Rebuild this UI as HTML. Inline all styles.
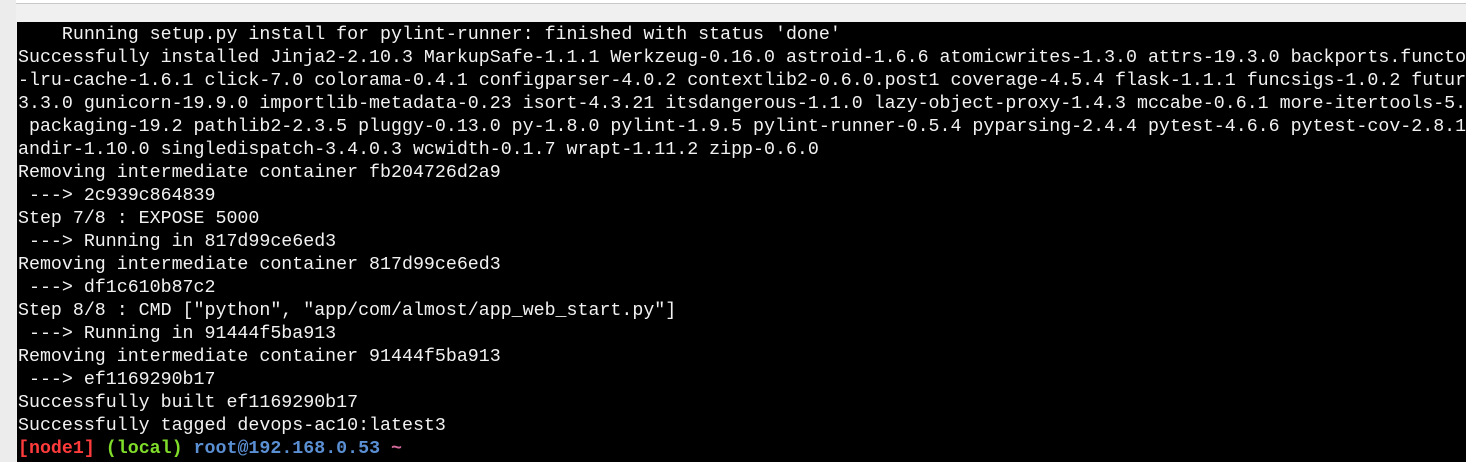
<!DOCTYPE html>
<html><head><style>
html,body{margin:0;padding:0;width:1466px;height:462px;overflow:hidden;background:#f0f0f0;}
.top{position:absolute;left:16px;top:0;width:1450px;height:3px;background:#fff;border-bottom:1px solid #c8c8c8;}
.leftbar{position:absolute;left:0;top:0;width:16px;height:462px;background:#ececec;}
.term{position:absolute;left:17px;top:22px;width:1449px;height:440px;background:#000;overflow:hidden;}
pre{margin:0;position:absolute;left:1px;top:2px;font-family:"Liberation Mono",monospace;font-size:18.3px;line-height:23px;color:#f2f2f2;white-space:pre;}
.r{color:#ff3b3b;font-weight:bold}.g{color:#7fdc2a;font-weight:bold}.b{color:#5b8fd3;font-weight:bold}.p{color:#d36a9a;font-weight:bold}
</style></head><body>
<div class="leftbar"></div><div class="top"></div>
<div class="term"><pre>    Running setup.py install for pylint-runner: finished with status 'done'
Successfully installed Jinja2-2.10.3 MarkupSafe-1.1.1 Werkzeug-0.16.0 astroid-1.6.6 atomicwrites-1.3.0 attrs-19.3.0 backports.functools
-lru-cache-1.6.1 click-7.0 colorama-0.4.1 configparser-4.0.2 contextlib2-0.6.0.post1 coverage-4.5.4 flask-1.1.1 funcsigs-1.0.2 futures-
3.3.0 gunicorn-19.9.0 importlib-metadata-0.23 isort-4.3.21 itsdangerous-1.1.0 lazy-object-proxy-1.4.3 mccabe-0.6.1 more-itertools-5.0.0
 packaging-19.2 pathlib2-2.3.5 pluggy-0.13.0 py-1.8.0 pylint-1.9.5 pylint-runner-0.5.4 pyparsing-2.4.4 pytest-4.6.6 pytest-cov-2.8.1 sc
andir-1.10.0 singledispatch-3.4.0.3 wcwidth-0.1.7 wrapt-1.11.2 zipp-0.6.0
Removing intermediate container fb204726d2a9
 ---&gt; 2c939c864839
Step 7/8 : EXPOSE 5000
 ---&gt; Running in 817d99ce6ed3
Removing intermediate container 817d99ce6ed3
 ---&gt; df1c610b87c2
Step 8/8 : CMD ["python", "app/com/almost/app_web_start.py"]
 ---&gt; Running in 91444f5ba913
Removing intermediate container 91444f5ba913
 ---&gt; ef1169290b17
Successfully built ef1169290b17
Successfully tagged devops-ac10:latest3
<span class="r">[node1]</span> <span class="g">(local)</span> <span class="b">root@192.168.0.53</span> <span class="p">~</span></pre></div>
</body></html>
